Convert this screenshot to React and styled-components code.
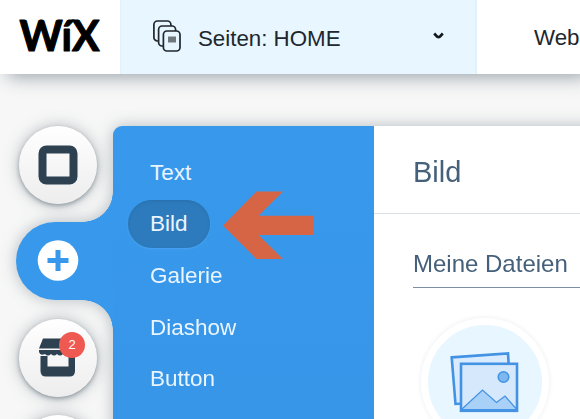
import styled, { createGlobalStyle } from 'styled-components';

const menuItems = ['Text', 'Bild', 'Galerie', 'Diashow', 'Button'];

const App = () => {
  return (
    <Page>
      <GlobalStyle />
      <TopBar>
        <LogoBox>
          <WixLogo />
        </LogoBox>
        <PagesMenu>
          <PagesIcon />
          <PagesLabel>Seiten: HOME</PagesLabel>
          <Chevron />
        </PagesMenu>
        <TopLink>Web</TopLink>
      </TopBar>
      <Workspace>
        <Rail>
          <RoundButton>
            <BackgroundIcon />
          </RoundButton>
          <AddTab>
            <PlusIcon />
          </AddTab>
          <RoundButton>
            <StoreIcon />
            <Badge>2</Badge>
          </RoundButton>
          <RoundButton />
        </Rail>
        <Panel>
          <Menu>
            {menuItems.map((item) => (
              <MenuRow key={item}>
                <MenuItem $active={item === 'Bild'}>{item}</MenuItem>
                {item === 'Bild' && <Arrow />}
              </MenuRow>
            ))}
          </Menu>
          <Content>
            <ContentHeader>Bild</ContentHeader>
            <Section>
              <SectionTitle>Meine Dateien</SectionTitle>
              <Picture>
                <PicturesIcon />
              </Picture>
            </Section>
          </Content>
        </Panel>
      </Workspace>
    </Page>
  );
};

export default App;

const WixLogo = () => (
  <svg width="92" height="60" viewBox="0 0 92 60" fontFamily="Lato, sans-serif" fontWeight="700" fontSize="42" stroke="#000" strokeWidth="1.2" strokeLinejoin="round">
    <text x="4.5" y="42.5" textLength="80" lengthAdjust="spacingAndGlyphs">WíX</text>
  </svg>
);

const PagesIcon = () => (
  <svg width="28" height="32" viewBox="0 0 28 32" fill="#e8f6ff" stroke="#20272d" strokeWidth="1.7">
    <rect x="0.9" y="1" width="17" height="20" rx="3.5" />
    <rect x="5.6" y="6" width="17" height="20" rx="3.5" />
    <rect x="10.4" y="11" width="16.6" height="20" rx="3.5" />
    <rect x="15" y="16.5" width="8" height="6" fill="#70787e" stroke="none" />
  </svg>
);

const Chevron = () => (
  <svg width="11" height="8" viewBox="0 0 11 8" fill="none" stroke="#11171c" strokeWidth="2.6">
    <path d="M1.2 1.5L4.2 4.7Q5.5 5.7 6.8 4.7L9.8 1.5" />
  </svg>
);

const BackgroundIcon = () => (
  <svg width="40" height="40" viewBox="0 0 40 40">
    <rect x="4.5" y="4.5" width="31" height="31" rx="4" fill="none" stroke="#2d4150" strokeWidth="8" />
  </svg>
);

const PlusIcon = () => (
  <svg width="42" height="42" viewBox="0 0 42 42">
    <circle cx="21" cy="20.5" r="20.3" fill="#fff" />
    <path d="M21 10V31M10.5 20.5H31.5" stroke="#3899ec" strokeWidth="5" />
  </svg>
);

const StoreIcon = () => (
  <svg width="38" height="40" viewBox="0 0 38 40" fill="#2d4150">
    <path d="M4 0.5H32L36 10.5H0Z" />
    <path d="M0 12H36V14Q33 18 30 16Q27 19 24 16Q21 19 18 16Q15 19 12 16Q9 19 6 16Q1 18 0 14Z" />
    <path d="M1.5 18H8.5V28.5H29.5V18H36V33Q36 38.5 30.5 38.5H7Q1.5 38.5 1.5 33Z" />
  </svg>
);

const Arrow = () => (
  <ArrowSvg width="91" height="68" viewBox="0 0 91 68" fill="#d66545">
    <path d="M0 34.5L33.5 0.5H60L35.5 24.8H90.5V44H35.5L60 68H33.5Z" />
  </ArrowSvg>
);

const PicturesIcon = () => (
  <svg width="70" height="62" viewBox="0 0 70 62" stroke="#4392e3" strokeWidth="2.6">
    <path d="M1.7 6.4L58 2.4L61 50L5.5 53Z" fill="#d9ecff" />
    <rect x="11" y="12.8" width="56" height="47" fill="#d6e9fc" />
    <path d="M12 58L32.5 39L46.5 51.5L55 45L66 57.5V58.6H12Z" fill="#a9d0f7" strokeWidth="1.2" />
    <circle cx="53.5" cy="26" r="5.3" fill="#7db7f0" strokeWidth="1.5" />
  </svg>
);

const GlobalStyle = createGlobalStyle`
  body {
    margin: 0;
    overflow: hidden;
    font-family: 'Liberation Sans', Arial, sans-serif;
  }
  * {
    box-sizing: border-box;
  }
  svg {
    display: block;
    flex-shrink: 0;
  }
`;

const Page = styled.div`
  width: 580px;
  height: 419px;
  overflow: hidden;
  background: #f7f7f7;
`;

const TopBar = styled.header`
  position: relative;
  display: flex;
  height: 74px;
  background: #fff;
  box-shadow: 8px 2px 18px rgba(22, 45, 61, 0.45);
  font-size: 22.3px;
  color: #20272d;
`;

const LogoBox = styled.div`
  width: 120px;
  flex-shrink: 0;
  padding: 8px 0 0 15px;
`;

const PagesMenu = styled.div`
  display: flex;
  align-items: center;
  width: 357px;
  flex-shrink: 0;
  padding: 0 31px 2px 32px;
  background: #e8f6ff;
  border: solid #e3eff9;
  border-width: 0 2px 0 1px;
`;

const PagesLabel = styled.span`
  flex: 1;
  padding: 5px 0 0 17px;
  white-space: nowrap;
`;

const TopLink = styled.div`
  padding: 25px 0 0 57px;
  line-height: 26px;
`;

/* one shadow follows the outline of the tab and the panel together */
const Workspace = styled.main`
  display: flex;
  width: 640px;
  height: 400px;
  padding-top: 52px;
  filter: drop-shadow(0 0 8px rgba(22, 45, 61, 0.3));
`;

const Rail = styled.nav`
  display: flex;
  flex-direction: column;
  width: 113px;
  flex-shrink: 0;
`;

const RoundButton = styled.div`
  position: relative;
  display: flex;
  align-items: center;
  justify-content: center;
  width: 78px;
  height: 78px;
  flex-shrink: 0;
  margin: 0 0 18px 19px;
  border-radius: 50%;
  background: linear-gradient(#fff, #ededee);
  box-shadow: 0 2px 4px rgba(22, 45, 61, 0.35);
`;

const AddTab = styled.div`
  position: relative;
  display: flex;
  align-items: center;
  height: 78px;
  flex-shrink: 0;
  margin: 0 0 19px 16px;
  padding-left: 21px;
  border-radius: 39px 0 0 39px;
  background: #3899ec;

  &::before,
  &::after {
    content: '';
    position: absolute;
    right: 0;
    width: 30px;
    height: 30px;
  }
  &::before {
    bottom: 100%;
    background: radial-gradient(circle at 0 0, transparent 29.5px, #3899ec 30px);
  }
  &::after {
    top: 100%;
    background: radial-gradient(circle at 0 100%, transparent 29.5px, #3899ec 30px);
  }
`;

const Badge = styled.span`
  position: absolute;
  top: 13px;
  right: 12px;
  width: 26px;
  height: 26px;
  border-radius: 50%;
  background: #ee5951;
  color: #fff;
  font-size: 13px;
  line-height: 26px;
  text-align: center;
`;

const Panel = styled.section`
  display: flex;
  flex: 1;
  height: 340px;
  border-radius: 9px 0 0 0;
  overflow: hidden;
`;

const Menu = styled.div`
  width: 261px;
  flex-shrink: 0;
  padding: 21px 0 0 15px;
  background: linear-gradient(#3899ec, #3795e7);
`;

const MenuRow = styled.div`
  display: flex;
  align-items: center;
  height: 51.6px;
`;

const MenuItem = styled.div`
  height: 48px;
  padding: 0 22px;
  border-radius: 24px;
  line-height: 48px;
  font-size: 22.5px;
  color: #eaf5ff;
  background: ${(props) => (props.$active ? '#2d7bbc' : 'transparent')};
  box-shadow: ${(props) =>
    props.$active ? 'inset 0 1px 3px #296fac, 0 1px 2px #4aa5f3' : 'none'};
`;

const ArrowSvg = styled.svg`
  margin: 2px 0 0 13px;
`;

const Content = styled.div`
  flex: 1;
  background: #fff;
  color: #45607a;
`;

const ContentHeader = styled.h2`
  height: 88px;
  margin: 0;
  padding: 0 0 0 39px;
  border-bottom: 1px solid #d9e1e8;
  font-size: 29px;
  font-weight: 400;
  line-height: 92px;
`;

const Section = styled.div`
  padding: 33px 0 0 39px;
`;

const SectionTitle = styled.h3`
  height: 41px;
  margin: 0 0 30px;
  border-bottom: 1px solid #7d8fa3;
  font-size: 24px;
  font-weight: 400;
  line-height: 34px;
`;

const Picture = styled.div`
  display: flex;
  align-items: center;
  justify-content: center;
  width: 128px;
  height: 128px;
  margin-left: 8px;
  border: 7px solid #fff;
  border-radius: 50%;
  background: #e8f6ff;
  box-shadow: 0 0 5px rgba(22, 45, 61, 0.09);
`;
